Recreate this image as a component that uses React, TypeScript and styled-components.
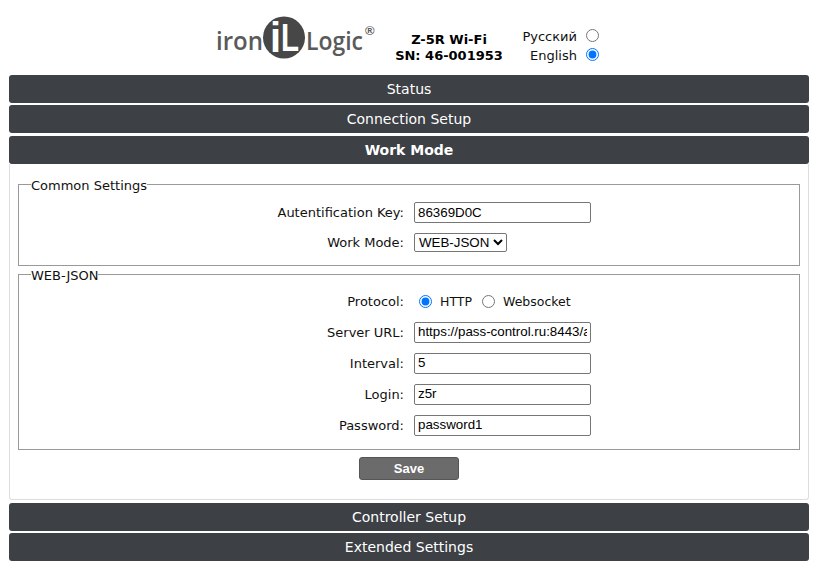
import React from "react";
import styled, { createGlobalStyle } from "styled-components";

const GlobalStyle = createGlobalStyle`
  html, body {
    margin: 0;
    background: #fff;
    font-family: "DejaVu Sans", Verdana, sans-serif;
    font-size: 13px;
    color: #111;
  }
`;

const Logo: React.FC = () => (
  <svg width={164} height={62} viewBox="0 0 164 62" fill="none">
    <text x="2" y="37" fontFamily="'Open Sans', sans-serif" fontWeight={600} fontSize={25} fill="#5a5a5a" textLength={47} lengthAdjust="spacingAndGlyphs">iron</text>
    <circle cx="70" cy="24.5" r="21" fill="#474747" />
    <text x="56" y="39" fontFamily="'Liberation Sans', sans-serif" fontWeight={700} fontSize={42} fill="#fff" textLength={11} lengthAdjust="spacingAndGlyphs">i</text>
    <text x="67" y="38" fontFamily="'Liberation Sans', sans-serif" fontWeight={700} fontSize={39} fill="#fff" textLength={18} lengthAdjust="spacingAndGlyphs">L</text>
    <text x="92" y="37" fontFamily="'Open Sans', sans-serif" fontWeight={600} fontSize={25} fill="#5a5a5a" textLength={57} lengthAdjust="spacingAndGlyphs">Logic</text>
    <text x="151" y="22" fontFamily="'Liberation Sans', sans-serif" fontWeight={700} fontSize={13} fill="#5a5a5a">®</text>
  </svg>
);

const App: React.FC = () => {
  return (
    <Page>
      <GlobalStyle />
      <Header>
        <Logo />
        <DeviceInfo>
          <div>Z-5R Wi-Fi</div>
          <div>SN: 46-001953</div>
        </DeviceInfo>
        <LangBox>
          <LangRow>
            Русский
            <LangRadio name="lang" />
          </LangRow>
          <LangRow>
            English
            <LangRadio name="lang" defaultChecked />
          </LangRow>
        </LangBox>
      </Header>

      <SectionHeader>Status</SectionHeader>
      <SectionHeader>Connection Setup</SectionHeader>
      <SectionHeader $active>Work Mode</SectionHeader>
      <Panel>
        <Group $height={90} $top={5}>
          <Legend>Common Settings</Legend>
          <FormRow $tight>
            <Label>Autentification Key:</Label>
            <TextInput defaultValue="86369D0C" />
          </FormRow>
          <FormRow $tight>
            <Label>Work Mode:</Label>
            <Select defaultValue="WEB-JSON">
              <option>WEB-JSON</option>
              <option>Proxy</option>
            </Select>
          </FormRow>
        </Group>
        <Group $height={184} $top={4}>
          <Legend>WEB-JSON</Legend>
          <FormRow $tight>
            <Label>Protocol:</Label>
            <RadioGroup>
              <Radio name="protocol" defaultChecked />
              <RadioText>HTTP</RadioText>
              <Radio name="protocol" />
              <RadioText>Websocket</RadioText>
            </RadioGroup>
          </FormRow>
          <FormRow>
            <Label>Server URL:</Label>
            <TextInput defaultValue="https://pass-control.ru:8443/api/z5r" />
          </FormRow>
          <FormRow>
            <Label>Interval:</Label>
            <TextInput defaultValue="5" />
          </FormRow>
          <FormRow>
            <Label>Login:</Label>
            <TextInput defaultValue="z5r" />
          </FormRow>
          <FormRow>
            <Label>Password:</Label>
            <TextInput defaultValue="password1" />
          </FormRow>
        </Group>
        <SaveButton>Save</SaveButton>
      </Panel>
      <SectionHeader>Controller Setup</SectionHeader>
      <SectionHeader>Extended Settings</SectionHeader>
    </Page>
  );
};

const Page = styled.div`
  width: 800px;
  margin: 0 auto;
  padding-top: 13px;
`;

const Header = styled.header`
  display: flex;
  align-items: flex-start;
  height: 62px;
  padding-left: 205px;
`;

const DeviceInfo = styled.div`
  width: 112px;
  margin-left: 15px;
  padding-top: 19px;
  text-align: center;
  font-weight: 700;
  font-size: 13px;
  line-height: 16px;
  color: #000;
`;

const LangBox = styled.div`
  display: flex;
  flex-direction: column;
  align-items: flex-end;
  width: 72px;
  margin-left: 22px;
  padding-top: 14px;
`;

const LangRow = styled.label`
  display: flex;
  align-items: center;
  height: 19px;
  gap: 9px;
  font-size: 13px;
`;

const Radio = styled.input.attrs({ type: "radio" })`
  width: 13px;
  height: 13px;
  margin: 0;
  flex: none;
`;

const LangRadio = styled(Radio)`
  margin-bottom: 3px;
`;

const SectionHeader = styled.div<{ $active?: boolean }>`
  height: 28px;
  margin-bottom: 2.4px;
  line-height: 29.6px;
  text-align: center;
  background: #3d4045;
  color: #fff;
  font-size: 14px;
  font-weight: ${(p) => (p.$active ? 700 : 400)};
  border-radius: 3px;
`;

const Panel = styled.div`
  box-sizing: border-box;
  height: 336px;
  margin-top: -2.4px;
  margin-bottom: 3px;
  padding: 12px 8px 0;
  border: 1px solid #ddd;
  border-top: none;
  border-radius: 0 0 3px 3px;
`;

const Group = styled.fieldset<{ $height: number; $top: number }>`
  box-sizing: border-box;
  height: ${(p) => p.$height}px;
  margin: 0;
  padding: ${(p) => p.$top}px 0 0;
  border: 1px solid #999;
  min-width: 0;
`;

const Legend = styled.legend`
  margin-left: 12px;
  padding: 2px 0 0;
  font-size: 13px;
  line-height: 15px;
`;

const FormRow = styled.div<{ $tight?: boolean }>`
  display: grid;
  grid-template-columns: 385px 177px;
  column-gap: 10px;
  align-items: center;
  height: ${(p) => (p.$tight ? 30 : 31)}px;
`;

const Label = styled.label`
  text-align: right;
  font-size: 13px;
`;

const TextInput = styled.input.attrs({ type: "text" })`
  box-sizing: border-box;
  width: 177px;
  height: 21px;
  padding: 0 3px 1px;
  border: 1px solid #767676;
  border-radius: 2px;
  font-family: "Liberation Sans", Arial, sans-serif;
  font-size: 13.33px;
  color: #000;
`;

const Select = styled.select`
  box-sizing: border-box;
  justify-self: start;
  height: 19px;
  border: 1px solid #767676;
  border-radius: 2px;
  background: #fff;
  font-family: "Liberation Sans", Arial, sans-serif;
  font-size: 13.33px;
  color: #000;
`;

const RadioGroup = styled.div`
  display: flex;
  align-items: center;
  white-space: nowrap;
  margin-left: 5px;
`;

const RadioText = styled.span`
  font-size: 12.5px;
  margin-left: 8px;
  margin-right: 10px;
`;

const SaveButton = styled.button`
  display: block;
  box-sizing: border-box;
  width: 100px;
  height: 23px;
  margin: 7px auto 0;
  padding: 0;
  background: #6b6b6b;
  border: 1px solid #555;
  border-radius: 3px;
  color: #fff;
  font-family: "Liberation Sans", Arial, sans-serif;
  font-size: 13px;
  font-weight: 700;
`;

export default App;
